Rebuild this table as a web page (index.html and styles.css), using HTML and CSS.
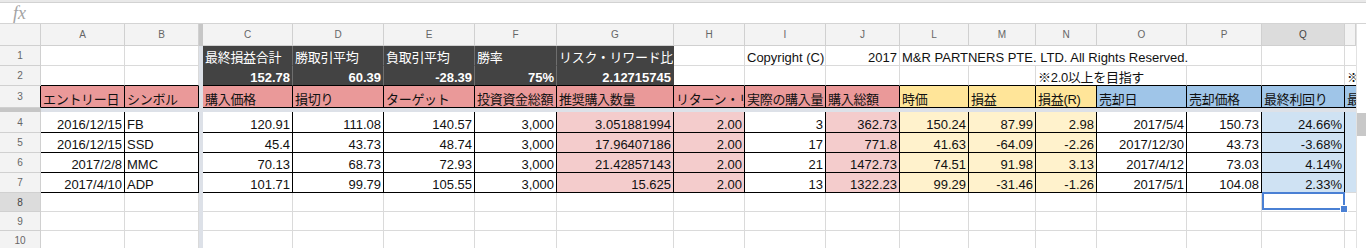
FILE: index.html
```html
<!DOCTYPE html>
<html lang="ja">
<head>
<meta charset="utf-8">
<title>Sheet</title>
<link rel="stylesheet" href="styles.css">
</head>
<body>
<div class="topstrip"></div>
<div class="fbar"><span class="fx">fx</span></div>
<div class="sheet">
  <div class="scroll"><div class="thumb"></div></div>

  <div class="ch"></div><div class="ch">A</div><div class="ch">B</div><div class="fzh"></div>
  <div class="ch">C</div><div class="ch">D</div><div class="ch">E</div><div class="ch">F</div><div class="ch">G</div>
  <div class="ch">H</div><div class="ch">I</div><div class="ch">J</div><div class="ch">L</div><div class="ch">M</div>
  <div class="ch">N</div><div class="ch">O</div><div class="ch">P</div><div class="ch sel">Q</div><div class="ch"></div>

  <div class="rh">1</div><div class="c"></div><div class="c"></div><div class="fz"></div>
  <div class="c dk jp">最終損益合計</div><div class="c dk jp">勝取引平均</div><div class="c dk jp">負取引平均</div><div class="c dk jp">勝率</div><div class="c dk dkg jp">リスク・リワード比率</div>
  <div class="c"></div><div class="c">Copyright (C)</div><div class="c r">2017</div>
  <div class="c s5">M&amp;R PARTNERS PTE. LTD. All Rights Reserved.</div><div class="c"></div><div class="c nr"></div>

  <div class="rh">2</div><div class="c bb"></div><div class="c bb"></div><div class="fz"></div>
  <div class="c dk b r bb">152.78</div><div class="c dk b r bb">60.39</div><div class="c dk b r bb">-28.39</div><div class="c dk b r bb">75%</div><div class="c dk dkg b r bb">2.12715745</div>
  <div class="c bb"></div><div class="c bb"></div><div class="c bb"></div>
  <div class="c bb"></div><div class="c bb"></div><div class="c bb s2 jp">※2.0以上を目指す</div><div class="c bb"></div><div class="c bb"></div><div class="c bb nr">※</div>

  <div class="rh blk">3</div><div class="c bk hp jp">エントリー日</div><div class="c bk hp jp">シンボル</div><div class="fz"></div>
  <div class="c bk hp jp">購入価格</div><div class="c bk hp jp">損切り</div><div class="c bk hp jp">ターゲット</div><div class="c bk hp jp">投資資金総額</div><div class="c bk hp jp">推奨購入数量</div>
  <div class="c bk hp jp">リターン・リスク比率</div><div class="c bk hp jp">実際の購入量</div><div class="c bk hp jp">購入総額</div>
  <div class="c bk hy jp">時価</div><div class="c bk hy jp">損益</div><div class="c bk hy jp">損益(R)</div>
  <div class="c bk hb jp">売却日</div><div class="c bk hb jp">売却価格</div><div class="c bk hb jp">最終利回り</div><div class="c bb hb nr jp">最終</div>

  <div class="fzrh"></div><div class="fzrow"></div>

  <div class="rh">4</div><div class="c bk r">2016/12/15</div><div class="c bk">FB</div><div class="fz"></div>
  <div class="c bk r">120.91</div><div class="c bk r">111.08</div><div class="c bk r">140.57</div><div class="c bk r">3,000</div><div class="c bk r dp">3.051881994</div>
  <div class="c bk r dp">2.00</div><div class="c bk r">3</div><div class="c bk r dp">362.73</div>
  <div class="c bk r dy">150.24</div><div class="c bk r dy">87.99</div><div class="c bk r dy">2.98</div>
  <div class="c bk r">2017/5/4</div><div class="c bk r">150.73</div><div class="c bk r dl">24.66%</div><div class="c dl dlx nr"></div>

  <div class="rh">5</div><div class="c bk r">2016/12/15</div><div class="c bk">SSD</div><div class="fz"></div>
  <div class="c bk r">45.4</div><div class="c bk r">43.73</div><div class="c bk r">48.74</div><div class="c bk r">3,000</div><div class="c bk r dp">17.96407186</div>
  <div class="c bk r dp">2.00</div><div class="c bk r">17</div><div class="c bk r dp">771.8</div>
  <div class="c bk r dy">41.63</div><div class="c bk r dy">-64.09</div><div class="c bk r dy">-2.26</div>
  <div class="c bk r">2017/12/30</div><div class="c bk r">43.73</div><div class="c bk r dl">-3.68%</div><div class="c dl dlx nr"></div>

  <div class="rh">6</div><div class="c bk r">2017/2/8</div><div class="c bk">MMC</div><div class="fz"></div>
  <div class="c bk r">70.13</div><div class="c bk r">68.73</div><div class="c bk r">72.93</div><div class="c bk r">3,000</div><div class="c bk r dp">21.42857143</div>
  <div class="c bk r dp">2.00</div><div class="c bk r">21</div><div class="c bk r dp">1472.73</div>
  <div class="c bk r dy">74.51</div><div class="c bk r dy">91.98</div><div class="c bk r dy">3.13</div>
  <div class="c bk r">2017/4/12</div><div class="c bk r">73.03</div><div class="c bk r dl">4.14%</div><div class="c dl dlx nr"></div>

  <div class="rh">7</div><div class="c bk r">2017/4/10</div><div class="c bk">ADP</div><div class="fz"></div>
  <div class="c bk r">101.71</div><div class="c bk r">99.79</div><div class="c bk r">105.55</div><div class="c bk r">3,000</div><div class="c bk r dp">15.625</div>
  <div class="c bk r dp">2.00</div><div class="c bk r">13</div><div class="c bk r dp">1322.23</div>
  <div class="c bk r dy">99.29</div><div class="c bk r dy">-31.46</div><div class="c bk r dy">-1.26</div>
  <div class="c bk r">2017/5/1</div><div class="c bk r">104.08</div><div class="c bk r dl">2.33%</div><div class="c dl nr"></div>

  <div class="rh sel">8</div><div class="c"></div><div class="c"></div><div class="fz"></div>
  <div class="c"></div><div class="c"></div><div class="c"></div><div class="c"></div><div class="c"></div>
  <div class="c"></div><div class="c"></div><div class="c"></div>
  <div class="c"></div><div class="c"></div><div class="c"></div>
  <div class="c"></div><div class="c"></div><div class="c cur"></div><div class="c nr"></div>

  <div class="rh">9</div><div class="c"></div><div class="c"></div><div class="fz"></div>
  <div class="c"></div><div class="c"></div><div class="c"></div><div class="c"></div><div class="c"></div>
  <div class="c"></div><div class="c"></div><div class="c"></div>
  <div class="c"></div><div class="c"></div><div class="c"></div>
  <div class="c"></div><div class="c"></div><div class="c"></div><div class="c nr"></div>

  <div class="rh">10</div><div class="c"></div><div class="c"></div><div class="fz"></div>
  <div class="c"></div><div class="c"></div><div class="c"></div><div class="c"></div><div class="c"></div>
  <div class="c"></div><div class="c"></div><div class="c"></div>
  <div class="c"></div><div class="c"></div><div class="c"></div>
  <div class="c"></div><div class="c"></div><div class="c"></div><div class="c nr"></div>
</div>
</body>
</html>
```

FILE: styles.css
```css
* {
  box-sizing: border-box;
  margin: 0;
  padding: 0;
}

body {
  width: 1366px;
  height: 248px;
  overflow: hidden;
  background: #ffffff;
  font-family: "Liberation Sans", "Noto Sans CJK JP", sans-serif;
  font-size: 13px;
  color: #111111;
}

.topstrip {
  height: 3px;
  background: #e9e9e9;
  border-bottom: 1px solid #d2d2d2;
}

.fbar {
  height: 21px;
  border-bottom: 1px solid #d4d4d4;
  display: flex;
  align-items: center;
  padding-left: 13px;
}

.fx {
  font-family: "Liberation Serif", serif;
  font-style: italic;
  font-size: 18px;
  line-height: 1;
  color: #a3a3a3;
}

.sheet {
  display: grid;
  grid-template-columns: 41px 84px 74px 4px 90px 91px 91px 82px 117px 71px 81px 74px 69px 67px 61px 90px 75px 83px 11px 10px;
  grid-template-rows: 22px 20px 20px 22px 4px 21px 20px 20px 20px 19px 19px 19px;
}

.scroll {
  grid-column: 20;
  grid-row: 1 / -1;
  border-left: 1px solid #e2e2e2;
  background: #ffffff;
  padding-top: 89px;
}

.thumb {
  height: 23px;
  background: #c8c8c8;
}

.ch,
.rh {
  display: flex;
  align-items: center;
  justify-content: center;
  background: #f3f3f3;
  border-right: 1px solid #d0d0d0;
  border-bottom: 1px solid #d0d0d0;
  font-size: 10px;
  color: #666666;
}

.ch.sel,
.rh.sel {
  background: #dcdcdc;
  color: #444444;
}

.rh.blk {
  border-right-color: #000000;
}

.fzh,
.fzrh {
  background: #c6c6c6;
}

.fz,
.fzrow {
  background: #dde1e8;
}

.fzrow {
  grid-column: 2 / 20;
}

.c {
  display: flex;
  align-items: flex-end;
  padding: 0 2px 0 2px;
  line-height: 15px;
  white-space: nowrap;
  overflow: hidden;
  border-right: 1px solid #dadada;
  border-bottom: 1px solid #dadada;
}

.jp {
  letter-spacing: -0.3px;
}

.r {
  justify-content: flex-end;
}

.b {
  font-weight: bold;
}

.nr {
  border-right: none;
}

.s2 {
  grid-column: span 2;
}

.s5 {
  grid-column: span 5;
}

.dk {
  background: #434343;
  color: #ffffff;
  border-right-color: #6e6e6e;
  border-bottom-color: #434343;
}

.dkg {
  border-right-color: #434343;
}

.bb {
  border-bottom-color: #000000;
}

.bk {
  border-right-color: #000000;
  border-bottom-color: #000000;
}

.hp {
  background: #ea9999;
}

.hy {
  background: #ffe599;
}

.hb {
  background: #9fc5e8;
}

.dp {
  background: #f4cccc;
}

.dy {
  background: #fff2cc;
}

.dl {
  background: #cfe2f3;
}

.dlx {
  border-bottom-color: #cfe2f3;
}

.cur {
  position: relative;
  overflow: visible;
}

.cur::before {
  content: "";
  position: absolute;
  left: 0;
  top: -1px;
  right: -1px;
  bottom: 1px;
  border: 2px solid #4a80d4;
}

.cur::after {
  content: "";
  position: absolute;
  right: -4px;
  bottom: -2px;
  width: 6px;
  height: 6px;
  background: #4a80d4;
  border: 1px solid #ffffff;
}
```
